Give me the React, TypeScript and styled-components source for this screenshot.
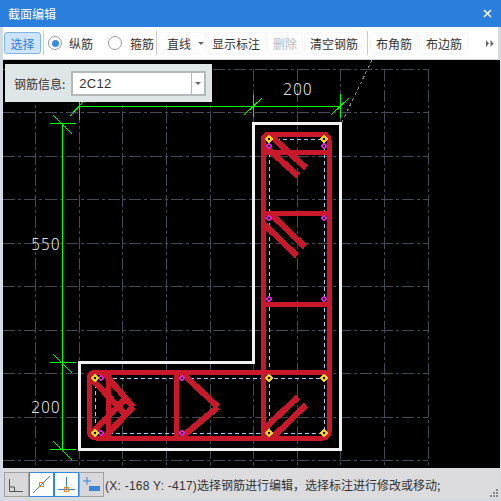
import React from "react";
import styled, { createGlobalStyle } from "styled-components";

const Global = createGlobalStyle`
  html, body { margin: 0; padding: 0; background: #d5dbe3; }
  * { box-sizing: border-box; }
`;

const Window = styled.div`
  width: 501px;
  height: 501px;
  display: flex;
  flex-direction: column;
  background: #d5dbe3;
  font-family: "Noto Sans CJK SC", "Liberation Sans", sans-serif;
  font-size: 12px;
  color: #333;
  overflow: hidden;
`;

const TitleBar = styled.div`
  height: 27px;
  flex: none;
  background: #2b7fdc;
  color: #fff;
  display: flex;
  align-items: center;
  justify-content: space-between;
  padding: 0 8px;
  font-size: 12px;
`;

const CloseIcon = styled.svg`
  width: 9px;
  height: 9px;
  margin-right: 1px;
`;

const Toolbar = styled.div`
  height: 33px;
  flex: none;
  margin: 0 3px 0 3px;
  background: #fff;
  border-bottom: 1px solid #cfd4da;
  display: flex;
  align-items: center;
  padding: 0 0 0 1px;
`;

const ToolButton = styled.div<{ $active?: boolean; $disabled?: boolean; $w: number }>`
  width: ${(p) => p.$w}px;
  height: 22px;
  flex: none;
  display: flex;
  align-items: center;
  justify-content: center;
  border-radius: 3px;
  border: 1px solid ${(p) => (p.$active ? "#7db5ee" : "#f6f6f8")};
  background: ${(p) => (p.$active ? "#cfe4fb" : "#fff")};
  color: ${(p) => (p.$active ? "#2b7fdc" : p.$disabled ? "#b8b8bc" : "#333")};
  margin-right: 1px;
`;

const DropButton = styled(ToolButton)`
  justify-content: flex-start;
  padding-left: 8px;
`;

const Caret = styled.span`
  width: 0;
  height: 0;
  border-left: 3px solid transparent;
  border-right: 3px solid transparent;
  border-top: 3px solid #666;
  margin-left: 7px;
`;

const Sep = styled.div<{ $mx: number }>`
  width: 1px;
  height: 24px;
  flex: none;
  background: #c9c9c9;
  margin: 0 ${(p) => p.$mx}px;
`;

const RadioLabel = styled.label<{ $w: number; $pl?: number; $gap: number }>`
  width: ${(p) => p.$w}px;
  flex: none;
  display: flex;
  align-items: center;
  gap: ${(p) => p.$gap}px;
  padding-left: ${(p) => p.$pl ?? 0}px;
`;

const RadioCircle = styled.span<{ $on?: boolean }>`
  width: 14px;
  height: 14px;
  border-radius: 50%;
  border: 1px solid #9a9a9a;
  background: #fff;
  display: flex;
  align-items: center;
  justify-content: center;
  &::after {
    content: "";
    width: 7px;
    height: 7px;
    border-radius: 50%;
    background: ${(p) => (p.$on ? "#3b8de0" : "transparent")};
  }
`;

const More = styled.svg`
  width: 8px;
  height: 7px;
  margin-left: auto;
  margin-right: 4px;
`;

const CanvasArea = styled.div`
  flex: 1;
  min-height: 0;
  position: relative;
  margin: 0 1px 0 3px;
  background: #000;
`;

const Drawing = styled.svg`
  display: block;
  width: 497px;
  height: 408px;
`;

const InfoPanel = styled.div`
  position: absolute;
  left: 2px;
  top: 4px;
  width: 207px;
  height: 38px;
  background: #dfe6e8;
  display: flex;
  align-items: center;
  padding: 0 6px 0 9px;
  gap: 6px;
`;

const Combo = styled.div`
  flex: 1;
  height: 25px;
  border: 2px solid #b5b8ba;
  background: #fff;
  display: flex;
  align-items: center;
  padding-left: 6px;
  font-family: "Liberation Sans", sans-serif;
  font-size: 13px;
  letter-spacing: 0.3px;
`;

const ComboValue = styled.span`
  flex: 1;
`;

const ComboArrow = styled.span`
  width: 13px;
  height: 100%;
  border-left: 1px solid #b5b8ba;
  display: flex;
  align-items: center;
  justify-content: center;
  &::after {
    content: "";
    border-left: 3px solid transparent;
    border-right: 3px solid transparent;
    border-top: 3px solid #666;
  }
`;

const StatusBar = styled.div`
  height: 31px;
  flex: none;
  margin: 0 1px 2px 3px;
  background: #dcdcde;
  display: flex;
  align-items: center;
  padding: 1px 0 0 1px;
  position: relative;
  white-space: nowrap;
`;

const SnapButton = styled.div<{ $on?: boolean }>`
  width: 25px;
  height: 25px;
  flex: none;
  border: 1px solid ${(p) => (p.$on ? "#2b8be6" : "#a0a0a0")};
  background: ${(p) => (p.$on ? "#fff" : "#d8d8da")};
  display: flex;
  align-items: center;
  justify-content: center;
  svg { width: 23px; height: 23px; display: block; }
`;

const StatusText = styled.span`
  margin-left: 1px;
  color: #333;
  font-size: 12px;
`;

const Coord = styled.span`
  font-family: "Liberation Sans", sans-serif;
  letter-spacing: 0.25px;
`;

const Grip = styled.svg`
  position: absolute;
  right: 1px;
  bottom: 1px;
  width: 9px;
  height: 9px;
`;

const Dim = styled.text`
  font-family: "DejaVu Sans", sans-serif;
  font-size: 15px;
  font-weight: 200;
  fill: #fff;
  letter-spacing: 0.2px;
`;

const RED = "#c8182a";
const gridX = [35, 79, 122, 166, 210, 253, 297, 340, 384, 428];
const gridY = [69, 112, 156, 199, 243, 286, 330, 373, 417, 460];

const straightBars: [number, number, number, number][] = [
  [263, 152, 329, 152],
  [263, 213, 329, 213],
  [263, 304, 329, 304],
  [108, 372, 108, 438],
  [176, 372, 176, 438],
];

const slantBars: [number, number, number, number][] = [
  [270, 135, 306, 168],
  [265, 146, 298, 176],
  [271, 214, 305, 247],
  [265, 225, 297, 256],
  [263, 430, 298, 397],
  [273, 437, 306, 405],
  [182, 373, 218, 407],
  [218, 407, 182, 437],
  [104, 373, 133, 407],
  [133, 407, 104, 438],
  [91, 378, 125, 414],
  [91, 434, 125, 399],
];

const yellow = [[269, 139], [324, 139], [269, 378], [324, 378], [269, 433], [324, 433], [95, 378], [95, 433]];
const magenta = [[269, 146], [324, 146], [269, 218], [324, 218], [269, 299], [324, 299], [182, 378], [182, 433], [101, 378], [101, 433]];

const greens: [number, number, number, number][] = [
  [79, 106, 340, 106],
  [79, 98, 79, 120],
  [253, 95, 253, 117],
  [340, 94, 340, 118],
  [70, 116, 84, 101],
  [244, 115, 262, 98],
  [331, 115, 349, 98],
  [62, 123, 62, 449],
  [50, 123, 76, 123],
  [50, 362, 76, 362],
  [50, 449, 76, 449],
  [53, 115, 72, 134],
  [53, 354, 72, 373],
  [53, 441, 72, 460],
];

const Diamond = ({ x, y, c, r }: { x: number; y: number; c: string; r: number }) => (
  <polygon points={`${x},${y - r} ${x + r},${y} ${x},${y + r} ${x - r},${y}`} fill="#0a0a0a" stroke={c} strokeWidth={1.5} />
);

export default function App() {
  return (
    <Window>
      <Global />
      <TitleBar>
        <span>截面编辑</span>
        <CloseIcon viewBox="0 0 9 9">
          <path d="M1 1L8 8M8 1L1 8" stroke="#fff" strokeWidth={1.6} />
        </CloseIcon>
      </TitleBar>
      <Toolbar>
        <ToolButton $active $w={37}>选择</ToolButton>
        <Sep $mx={1} />
        <RadioLabel $w={63} $pl={3} $gap={7}>
          <RadioCircle $on />
          纵筋
        </RadioLabel>
        <RadioLabel $w={47} $gap={8}>
          <RadioCircle />
          箍筋
        </RadioLabel>
        <Sep $mx={1} />
        <DropButton $w={47}>直线<Caret /></DropButton>
        <ToolButton $w={60}>显示标注</ToolButton>
        <ToolButton $w={36} $disabled>删除</ToolButton>
        <ToolButton $w={60}>清空钢筋</ToolButton>
        <Sep $mx={2} />
        <ToolButton $w={48}>布角筋</ToolButton>
        <ToolButton $w={50}>布边筋</ToolButton>
        <More viewBox="0 0 8 7">
          <path d="M0 0L3 3.5L0 7ZM4.5 0L7.5 3.5L4.5 7Z" fill="#666" />
        </More>
      </Toolbar>
      <CanvasArea>
        <Drawing viewBox="3 60 497 408" shapeRendering="crispEdges">
          <g stroke="#444a56" strokeWidth={1} strokeDasharray="12 3 3 3" fill="none">
            {gridX.map((x) => <line key={x} x1={x} y1={69} x2={x} y2={470} />)}
            {gridY.map((y) => <line key={y} x1={3} y1={y} x2={428} y2={y} />)}
          </g>
          <line x1={372} y1={60} x2={342} y2={122} stroke="#8a8a8a" strokeDasharray="3 3" />
          <g stroke="#00ff00" strokeWidth={1}>
            {greens.map(([a, b, c, d], i) => <line key={i} x1={a} y1={b} x2={c} y2={d} />)}
          </g>
          <path d="M253.5 362.5V123.5H340.5V449.5H79.5V362.5Z" fill="none" stroke="#f2f2f2" strokeWidth={3} />
          <g stroke="#a9cdf2" strokeWidth={1} strokeDasharray="4 3" fill="none">
            <path d="M269 139H324V433H95V378H324M269 139V433" />
          </g>
          <g stroke={RED} strokeWidth={5} fill="none">
            <rect x={263} y={134} width={66} height={304} rx={6} />
            <rect x={89} y={372} width={240} height={66} rx={7} />
            {straightBars.map(([a, b, c, d], i) => <line key={i} x1={a} y1={b} x2={c} y2={d} />)}
          </g>
          <g stroke={RED} strokeWidth={6} fill="none">
            {slantBars.map(([a, b, c, d], i) => <line key={i} x1={a} y1={b} x2={c} y2={d} />)}
          </g>
          {magenta.map(([x, y], i) => <Diamond key={i} x={x} y={y} r={2.5} c="#e81ce8" />)}
          {yellow.map(([x, y], i) => <Diamond key={i} x={x} y={y} r={3} c="#f2d028" />)}
          <Dim x={283} y={95}>200</Dim>
          <Dim x={31} y={250}>550</Dim>
          <Dim x={31} y={413}>200</Dim>
        </Drawing>
        <InfoPanel>
          钢筋信息:
          <Combo>
            <ComboValue>2C12</ComboValue>
            <ComboArrow />
          </Combo>
        </InfoPanel>
      </CanvasArea>
      <StatusBar>
        <SnapButton>
          <svg viewBox="0 0 23 23">
            <path d="M4.5 6V18.5H18M4.5 14H9.5V18.5" fill="none" stroke="#555" />
          </svg>
        </SnapButton>
        <SnapButton $on>
          <svg viewBox="0 0 23 23">
            <path d="M3 20L20 3" stroke="#3b7fcc" />
            <rect x={9.5} y={9.5} width={4} height={4} fill="none" stroke="#e8822a" />
          </svg>
        </SnapButton>
        <SnapButton $on>
          <svg viewBox="0 0 23 23">
            <path d="M3 16.5H20M11.5 4V16.5" stroke="#3b7fcc" />
            <rect x={9.5} y={14.5} width={4} height={4} fill="none" stroke="#e8822a" />
          </svg>
        </SnapButton>
        <SnapButton>
          <svg viewBox="0 0 23 23">
            <path d="M3 8H11M7 4V12" stroke="#3b85d8" />
            <rect x={9} y={13} width={11} height={5} fill="#3b85d8" />
          </svg>
        </SnapButton>
        <StatusText>
          <Coord>(X: -168 Y: -417)</Coord>选择钢筋进行编辑，选择标注进行修改或移动;
        </StatusText>
        <Grip viewBox="0 0 9 9">
          <path d="M6 0h2v2H6zM3 3h2v2H3zM6 3h2v2H6zM0 6h2v2H0zM3 6h2v2H3zM6 6h2v2H6z" fill="#888" />
        </Grip>
      </StatusBar>
    </Window>
  );
}
